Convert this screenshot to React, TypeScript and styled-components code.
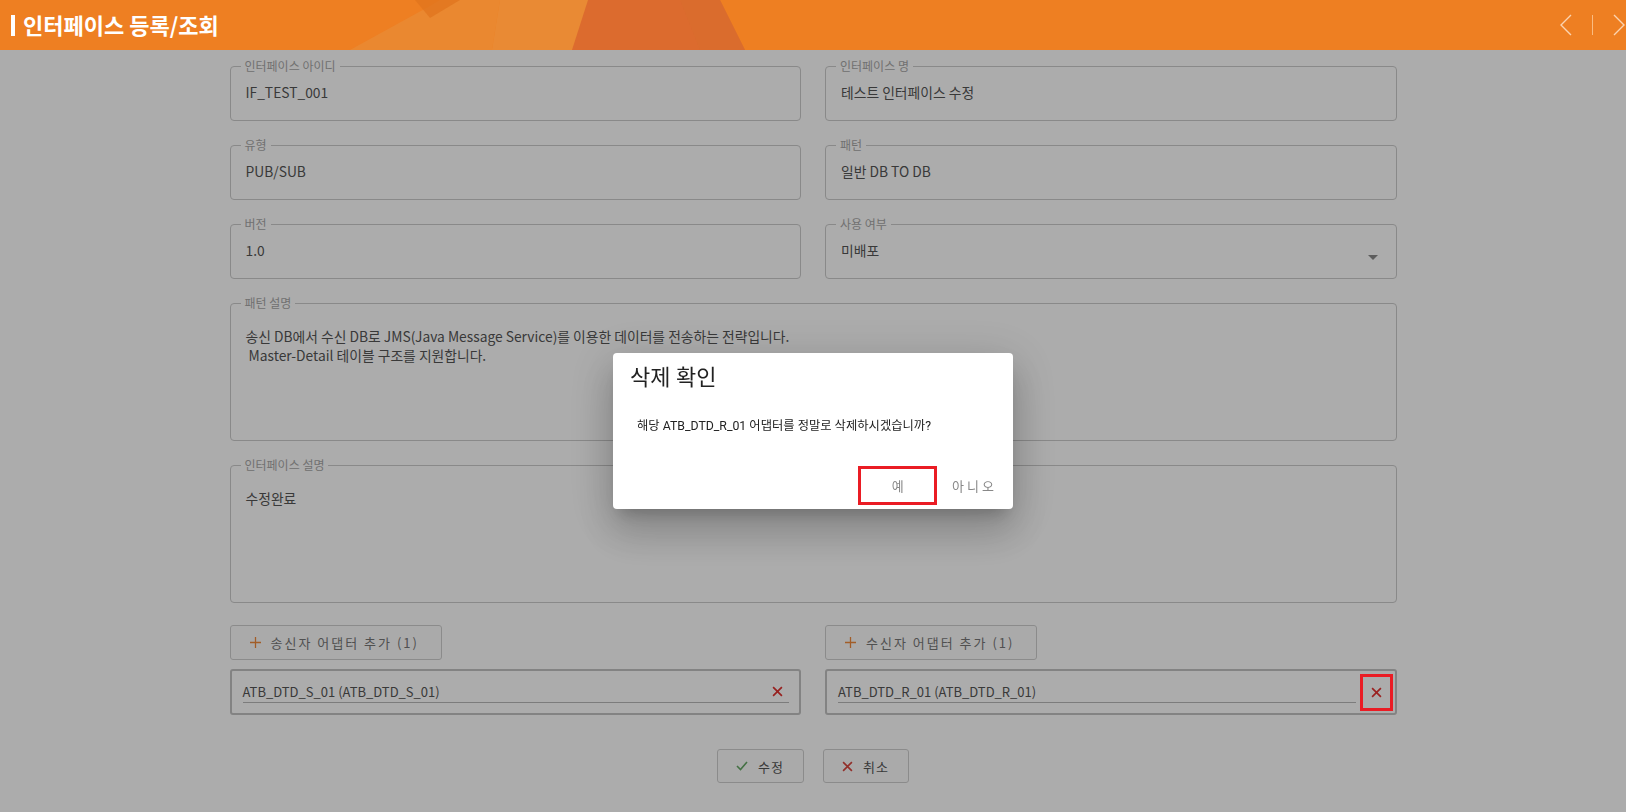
import * as React from "react";
import styled, { createGlobalStyle } from "styled-components";

const orange = "#ee7f22";

const GlobalStyle = createGlobalStyle`
  html, body {
    margin: 0;
    padding: 0;
  }
  body {
    font-family: "Noto Sans CJK KR", "Noto Sans", sans-serif;
    background: #fff;
    color: #555;
  }
`;

const Page = styled.div`
  min-height: 812px;
`;

const Header = styled.header`
  position: relative;
  height: 50px;
  background: ${orange};
  display: flex;
  align-items: center;
  padding: 0 1px 0 11px;
  box-sizing: border-box;
  overflow: hidden;
`;

const HeaderArt = styled.svg`
  position: absolute;
  left: 0;
  top: 0;
  width: 100%;
  height: 100%;
`;

const TitleBar = styled.span`
  position: relative;
  width: 4px;
  height: 21px;
  background: #fff;
  margin-right: 8px;
`;

const Title = styled.h1`
  position: relative;
  margin: 0 0 2px;
  font-size: 22px;
  font-weight: 700;
  color: #fff;
`;

const Nav = styled.div`
  position: relative;
  margin-left: auto;
  display: flex;
  align-items: center;
  gap: 20px;
`;

const NavSep = styled.span`
  width: 1px;
  height: 20px;
  background: rgba(255, 214, 170, 0.7);
`;

const Main = styled.main`
  width: 1167px;
  margin: 0 auto;
  padding-top: 9px;
`;

const FormGrid = styled.div`
  display: grid;
  grid-template-columns: 1fr 1fr;
  column-gap: 24px;
  row-gap: 17px;
`;

const Fieldset = styled.fieldset<{ $wide?: boolean; $tall?: boolean }>`
  position: relative;
  margin: 0;
  min-width: 0;
  box-sizing: border-box;
  height: ${(p) => (p.$tall ? "145px" : "62px")};
  padding: 0 15px;
  border: 1px solid #cbcbcb;
  border-radius: 4px;
  grid-column: ${(p) => (p.$wide ? "1 / -1" : "auto")};
`;

const Legend = styled.legend`
  margin-left: -5px;
  padding: 0 4px;
  font-size: 12px;
  line-height: 14px;
  color: #a8a8a8;
`;

const Value = styled.div<{ $tall?: boolean }>`
  padding-top: ${(p) => (p.$tall ? "17px" : "10px")};
  font-size: 13.8px;
  line-height: 19px;
  color: #555;
  white-space: pre-wrap;
`;

const SelectArrow = styled.span`
  position: absolute;
  right: 18px;
  top: 24px;
  width: 0;
  height: 0;
  border-left: 5px solid transparent;
  border-right: 5px solid transparent;
  border-top: 5px solid #8a8a8a;
`;

const AdapterGrid = styled.div`
  display: grid;
  grid-template-columns: 1fr 1fr;
  column-gap: 24px;
  margin-top: 22px;
`;

const AdapterColumn = styled.div`
  display: flex;
  flex-direction: column;
  align-items: flex-start;
  gap: 9px;
`;

const AddButton = styled.button`
  width: 212px;
  height: 35px;
  display: flex;
  align-items: center;
  gap: 10px;
  padding: 0 0 0 19px;
  box-sizing: border-box;
  background: #fdfdfd;
  border: 1px solid #cfcfcf;
  border-radius: 3px;
  font-family: inherit;
  font-size: 13px;
  letter-spacing: 2px;
  color: #777;
`;

const AdapterBox = styled.div<{ $removing?: boolean }>`
  align-self: stretch;
  height: 46px;
  box-sizing: border-box;
  display: flex;
  align-items: center;
  gap: 4px;
  padding: 0 ${(p) => (p.$removing ? "2px" : "10px")} 0 11px;
  border: 2px solid #c2c2c2;
  border-radius: 3px;
`;

const AdapterInput = styled.div`
  flex: 1;
  display: flex;
  align-items: center;
  justify-content: space-between;
  height: 21px;
  padding-right: 6px;
  border-bottom: 1px solid #b8b8b8;
  font-size: 13px;
  color: #555;
`;

/* annotation box drawn above the dim layer, like the marker in the capture */
const RemoveBox = styled.span`
  position: relative;
  z-index: 2;
  width: 33px;
  height: 37px;
  box-sizing: border-box;
  display: flex;
  align-items: center;
  justify-content: center;
  border: 3px solid #ea1c24;
`;

const Footer = styled.div`
  display: flex;
  justify-content: center;
  gap: 19px;
  margin-top: 34px;
`;

const FooterButton = styled.button`
  height: 34px;
  display: flex;
  align-items: center;
  gap: 10px;
  padding: 0 19px 0 18px;
  background: #fdfdfd;
  border: 1px solid #cfcfcf;
  border-radius: 3px;
  font-family: inherit;
  font-size: 13px;
  letter-spacing: 1px;
  color: #555;
`;

const Overlay = styled.div`
  position: fixed;
  z-index: 1;
  top: 50px;
  left: 0;
  right: 0;
  bottom: 0;
  background: rgba(0, 0, 0, 0.325);
  display: flex;
  align-items: center;
  justify-content: center;
`;

const Dialog = styled.div`
  width: 400px;
  height: 156px;
  box-sizing: border-box;
  background: #fff;
  border-radius: 4px;
  font-family: Roboto, "Noto Sans CJK KR", sans-serif;
  display: flex;
  flex-direction: column;
  box-shadow: 0 11px 15px -7px rgba(0, 0, 0, 0.2), 0 24px 38px 3px rgba(0, 0, 0, 0.14),
    0 9px 46px 8px rgba(0, 0, 0, 0.12);
`;

const DialogTitle = styled.h2`
  margin: 0;
  padding: 12px 17px 0;
  font-size: 22px;
  line-height: 26px;
  font-weight: 400;
  color: #222;
`;

const DialogText = styled.p`
  margin: 26px 0 0;
  padding: 0 24px;
  font-size: 12.3px;
  line-height: 18px;
  color: #222;
`;

const DialogActions = styled.div`
  margin-top: auto;
  display: flex;
  align-items: center;
  justify-content: flex-end;
  gap: 15px;
  padding: 0 16px 4px 0;
`;

const DialogButton = styled.button<{ $marked?: boolean }>`
  height: 39px;
  min-width: ${(p) => (p.$marked ? "79px" : "0")};
  box-sizing: border-box;
  padding: 0;
  background: transparent;
  border: ${(p) => (p.$marked ? "3px solid #ea1c24" : "none")};
  font-family: inherit;
  font-size: 13px;
  letter-spacing: ${(p) => (p.$marked ? "0" : "3px")};
  color: #888;
`;

const Chevron = ({ dir }: { dir: "left" | "right" }) => (
  <svg width="12" height="22" viewBox="0 0 12 22">
    <path
      d={dir === "left" ? "M11 1 L1 11 L11 21" : "M1 1 L11 11 L1 21"}
      fill="none"
      stroke="#fbd4b0"
      strokeWidth="1.4"
    />
  </svg>
);

const CrossIcon = ({ color = "#e0302e", size = 11 }: { color?: string; size?: number }) => (
  <svg width={size} height={size} viewBox="0 0 10 10">
    <path d="M1 1 L9 9 M9 1 L1 9" stroke={color} strokeWidth="1.5" fill="none" />
  </svg>
);

const PlusIcon = () => (
  <svg width="11" height="11" viewBox="0 0 11 11">
    <path d="M5.5 0 V11 M0 5.5 H11" stroke="#f08a3c" strokeWidth="1.3" fill="none" />
  </svg>
);

const CheckIcon = () => (
  <svg width="12" height="10" viewBox="0 0 12 10">
    <path d="M1 5 L4.5 8.5 L11 1" stroke="#66a866" strokeWidth="1.6" fill="none" />
  </svg>
);

const Field = ({ label, value, wide, tall, select }: {
  label: string; value: string; wide?: boolean; tall?: boolean; select?: boolean;
}) => (
  <Fieldset $wide={wide} $tall={tall}>
    <Legend>{label}</Legend>
    <Value $tall={tall}>{value}</Value>
    {select && <SelectArrow />}
  </Fieldset>
);

const Adapter = ({ button, name, removing }: { button: string; name: string; removing?: boolean }) => (
  <AdapterColumn>
    <AddButton>
      <PlusIcon />
      {button}
    </AddButton>
    <AdapterBox $removing={removing}>
      <AdapterInput>
        {name}
        {!removing && <CrossIcon />}
      </AdapterInput>
      {removing && (
        <RemoveBox>
          {/* sits above the dim layer, so use the already dimmed red */}
          <CrossIcon color="#9a2120" />
        </RemoveBox>
      )}
    </AdapterBox>
  </AdapterColumn>
);

export default function App() {
  return (
    <Page>
      <GlobalStyle />
      <Header>
        <HeaderArt viewBox="0 0 1626 50" preserveAspectRatio="none">
          <polygon points="350,50 430,6 440,0 500,0 492,50" fill="#e88b34" opacity="0.8" />
          <polygon points="415,0 460,0 430,18" fill="#e0731c" opacity="0.7" />
          <polygon points="492,50 500,0 590,0 573,50" fill="#e98a34" />
          <polygon points="588,0 720,0 745,50 572,50" fill="#dc6b2e" />
          <polygon points="680,0 720,0 745,50 700,50" fill="#d86c2d" opacity="0.6" />
        </HeaderArt>
        <TitleBar />
        <Title>인터페이스 등록/조회</Title>
        <Nav>
          <Chevron dir="left" />
          <NavSep />
          <Chevron dir="right" />
        </Nav>
      </Header>

      <Main>
        <FormGrid>
          <Field label="인터페이스 아이디" value="IF_TEST_001" />
          <Field label="인터페이스 명" value="테스트 인터페이스 수정" />
          <Field label="유형" value="PUB/SUB" />
          <Field label="패턴" value="일반 DB TO DB" />
          <Field label="버전" value="1.0" />
          <Field label="사용 여부" value="미배포" select />
          <Field
            label="패턴 설명"
            value={"송신 DB에서 수신 DB로 JMS(Java Message Service)를 이용한 데이터를 전송하는 전략입니다.\n Master-Detail 테이블 구조를 지원합니다."}
            wide
            tall
          />
          <Field label="인터페이스 설명" value="수정완료" wide tall />
        </FormGrid>

        <AdapterGrid>
          <Adapter button="송신자 어댑터 추가 (1)" name="ATB_DTD_S_01 (ATB_DTD_S_01)" />
          <Adapter button="수신자 어댑터 추가 (1)" name="ATB_DTD_R_01 (ATB_DTD_R_01)" removing />
        </AdapterGrid>

        <Footer>
          <FooterButton>
            <CheckIcon />
            수정
          </FooterButton>
          <FooterButton>
            <CrossIcon color="#d9463f" />
            취소
          </FooterButton>
        </Footer>
      </Main>

      <Overlay>
        <Dialog>
          <DialogTitle>삭제 확인</DialogTitle>
          <DialogText>해당 ATB_DTD_R_01 어댑터를 정말로 삭제하시겠습니까?</DialogText>
          <DialogActions>
            <DialogButton $marked>예</DialogButton>
            <DialogButton>아니오</DialogButton>
          </DialogActions>
        </Dialog>
      </Overlay>
    </Page>
  );
}
